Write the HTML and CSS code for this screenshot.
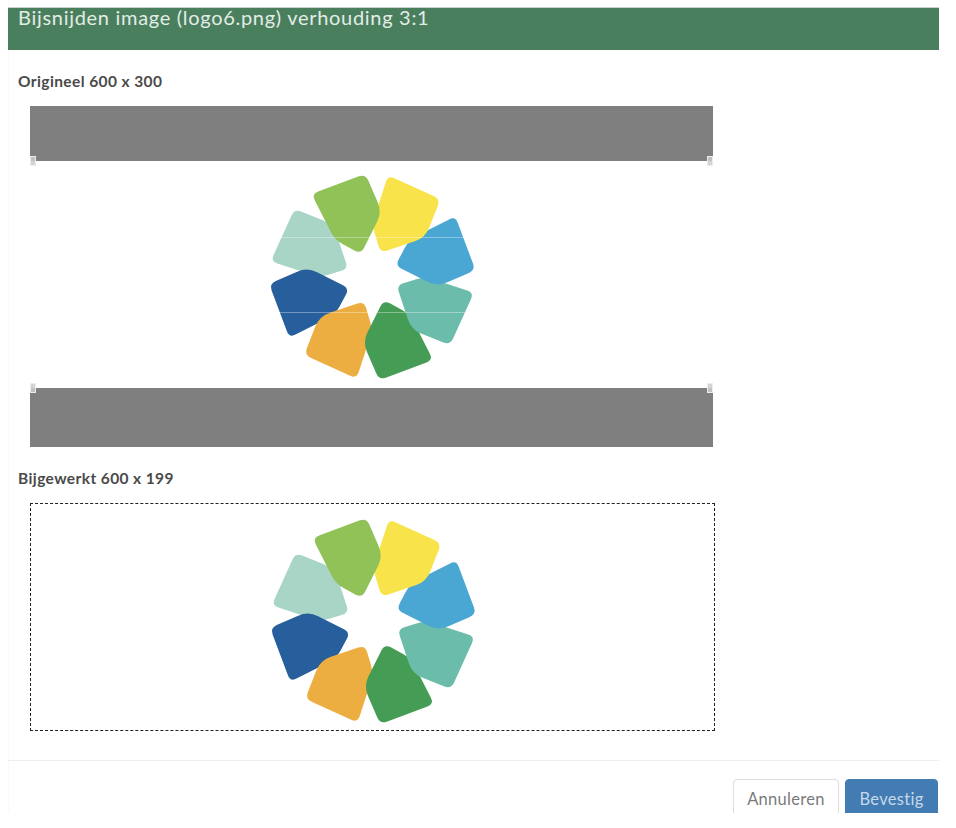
FILE: index.html
```html
<!DOCTYPE html>
<html lang="nl">
  <head>
    <meta charset="UTF-8" />
    <meta name="viewport" content="width=device-width, initial-scale=1.0" />
    <title>Bijsnijden image</title>
    <link rel="stylesheet" href="styles.css">
  </head>
  <body>
    <div class="modal">
      <div class="modal-header">Bijsnijden image (logo6.png) verhouding 3:1</div>

      <div class="modal-body">
        <p class="label">Origineel 600 x 300</p>
        <div class="crop-image">
          <svg class="logo" viewBox="0 0 230 225">
            <defs>
              <path id="petal" d="M63.1 26.6L103.9 11.3Q110.5 9 113.3 15.4L122.6 36.9Q127 47 122.1 56.8L109.1 82.7Q106 89 99.8 85.7L87.9 79.3Q80 75 75.9 67L59.7 35.2Q56.5 29 63.1 26.6Z" />
            </defs>
            <use href="#petal" fill="#a9d5c6" transform="rotate(-45 117.3 112)" />
            <use href="#petal" fill="#275f9d" transform="rotate(-90 117.3 112)" />
            <use href="#petal" fill="#ecae40" transform="rotate(-135 117.3 112)" />
            <use href="#petal" fill="#459c55" transform="rotate(180 117.3 112)" />
            <use href="#petal" fill="#6cbcab" transform="rotate(135 117.3 112)" />
            <use href="#petal" fill="#4aa6d3" transform="rotate(90 117.3 112)" />
            <use href="#petal" fill="#f8e34a" transform="rotate(45 117.3 112)" />
            <use href="#petal" fill="#90c257" />
          </svg>
          <div class="shade shade-top"></div>
          <div class="shade shade-bottom"></div>
          <div class="guide guide-1"></div>
          <div class="guide guide-2"></div>
          <span class="handle handle-tl"></span>
          <span class="handle handle-tr"></span>
          <span class="handle handle-bl"></span>
          <span class="handle handle-br"></span>
        </div>

        <p class="label">Bijgewerkt 600 x 199</p>
        <div class="result-image">
          <svg class="logo" viewBox="0 0 230 225">
            <use href="#petal" fill="#a9d5c6" transform="rotate(-45 117.3 112)" />
            <use href="#petal" fill="#275f9d" transform="rotate(-90 117.3 112)" />
            <use href="#petal" fill="#ecae40" transform="rotate(-135 117.3 112)" />
            <use href="#petal" fill="#459c55" transform="rotate(180 117.3 112)" />
            <use href="#petal" fill="#6cbcab" transform="rotate(135 117.3 112)" />
            <use href="#petal" fill="#4aa6d3" transform="rotate(90 117.3 112)" />
            <use href="#petal" fill="#f8e34a" transform="rotate(45 117.3 112)" />
            <use href="#petal" fill="#90c257" />
          </svg>
        </div>
      </div>

      <div class="modal-footer">
        <button type="button" class="btn btn-default">Annuleren</button>
        <button type="button" class="btn btn-primary">Bevestig</button>
      </div>
    </div>
  </body>
</html>
```

FILE: styles.css
```css
body {
  margin: 0;
  background: #fff;
  font-family: Lato, "Open Sans", sans-serif;
}
.modal {
  width: 931px;
  height: 813px;
  box-sizing: border-box;
  margin-left: 8px;
  padding-top: 7px;
  overflow: hidden;
  box-shadow: inset 1px 0 0 #f9f9f9;
}
.modal-header {
  height: 43px;
  box-sizing: border-box;
  padding: 0 10px;
  background: #4a7f5e;
  border-top: 1px solid #c9d3cd;
  color: #e3ece6;
  font-size: 20px;
  font-weight: 400;
  line-height: 18px;
  letter-spacing: 0.7px;
}
.modal-body {
  padding: 21px 0 0 10px;
}
.label {
  margin: 0 0 15px;
  height: 20px;
  color: #4a4a4a;
  font-size: 15.5px;
  font-weight: 700;
  line-height: 20px;
  letter-spacing: 0.4px;
}
.crop-image {
  position: relative;
  width: 683px;
  height: 341px;
  margin: 0 0 21px 12px;
  padding: 59px 0 0 225px;
  box-sizing: border-box;
}
.result-image {
  width: 685px;
  height: 228px;
  margin-left: 12px;
  padding: 5px 0 0 225px;
  box-sizing: border-box;
  border: 1px dashed #222;
}
.logo {
  display: block;
  width: 230px;
  height: 225px;
}
.shade {
  position: absolute;
  left: 0;
  width: 100%;
  background: #7f7f7f;
}
.shade-top {
  top: 0;
  height: 55px;
}
.shade-bottom {
  top: 282px;
  height: 59px;
}
.guide {
  position: absolute;
  left: 0;
  width: 100%;
  height: 1px;
  background: rgba(255, 255, 255, 0.35);
}
.guide-1 {
  top: 131px;
}
.guide-2 {
  top: 206px;
}
.handle {
  position: absolute;
  width: 6px;
  height: 10px;
  background: rgba(205, 205, 205, 0.85);
  border: 1px solid #ececec;
  box-sizing: border-box;
}
.handle-tl {
  left: 0;
  top: 50px;
}
.handle-tr {
  right: 0;
  top: 50px;
}
.handle-bl {
  left: 0;
  top: 277px;
}
.handle-br {
  right: 0;
  top: 277px;
}
.modal-footer {
  display: flex;
  justify-content: flex-end;
  gap: 6px;
  margin-top: 29px;
  padding: 18px 1px 0 0;
  border-top: 1px solid #eee;
}
.btn {
  height: 40px;
  padding: 0;
  border-radius: 4px;
  font-family: inherit;
  font-size: 16.5px;
  letter-spacing: 0.3px;
  cursor: pointer;
}
.btn-default {
  width: 106px;
  background: #fff;
  border: 1px solid #ddd;
  color: #7a7a7a;
}
.btn-primary {
  width: 93px;
  background: #427cb3;
  border: 1px solid #427cb3;
  color: #c6d8ea;
}
```
